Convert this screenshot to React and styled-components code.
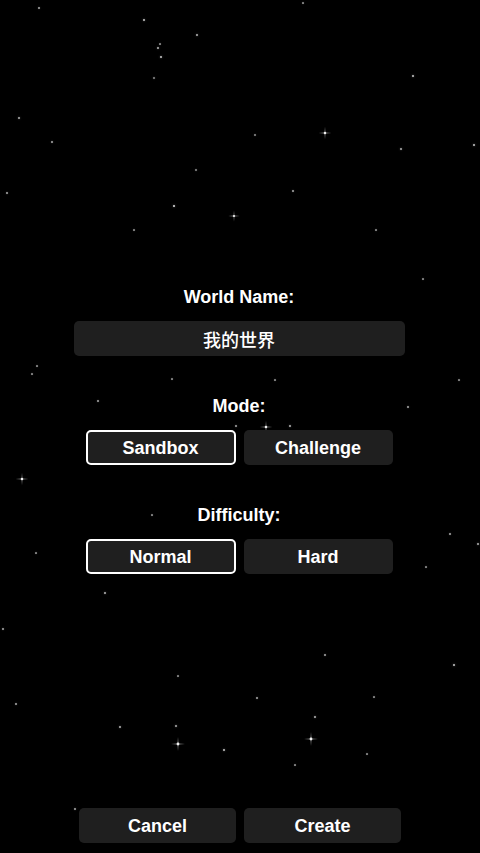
import React from "react";
import styled, { createGlobalStyle } from "styled-components";

const Global = createGlobalStyle`
  html, body { margin: 0; padding: 0; background: #000; }
  body { font-family: "Liberation Sans", Arial, sans-serif; }
  * { box-sizing: border-box; }
`;

const Screen = styled.div`
  position: relative;
  width: 480px;
  height: 853px;
  background: #000;
  overflow: hidden;
  display: flex;
  flex-direction: column;
  align-items: center;
  color: #fff;
`;

const Sky = styled.div`
  position: absolute;
  inset: 0;
  pointer-events: none;
`;

const Dot = styled.span`
  position: absolute;
  width: ${(p) => p.$s}px;
  height: ${(p) => p.$s}px;
  margin: ${(p) => -p.$s / 2}px 0 0 ${(p) => -p.$s / 2}px;
  border-radius: 50%;
  background: rgba(255, 255, 255, ${(p) => p.$o});
  box-shadow: 0 0 ${(p) => p.$s}px rgba(255, 255, 255, ${(p) => p.$o * 0.5});
`;

const Sparkle = styled.svg`
  position: absolute;
  width: 16px;
  height: 16px;
  margin: -8px 0 0 -8px;
  overflow: visible;
`;

const Form = styled.main`
  position: relative;
  z-index: 1;
  flex: 1;
  display: flex;
  flex-direction: column;
  align-items: center;
  padding-top: 286px;
  padding-right: 2px;
  gap: 39px;
`;

const Section = styled.section`
  display: flex;
  flex-direction: column;
  align-items: center;
  gap: 13px;
`;

const Label = styled.div`
  font-size: 18px;
  font-weight: 700;
  line-height: 22px;
`;

const NameField = styled.div`
  width: 331px;
  height: 35px;
  border-radius: 5px;
  background: #1f1f1f;
  display: flex;
  align-items: center;
  justify-content: center;
  padding-top: 1px;
  font-family: "Liberation Sans", "Noto Sans CJK SC", sans-serif;
  font-size: 18px;
  font-weight: 500;
  color: #fff;
`;

const Choices = styled.div`
  display: flex;
  gap: 8px;
`;

const Choice = styled.button`
  width: ${(p) => p.$w || 150}px;
  height: 35px;
  border-radius: 5px;
  background: #1f1f1f;
  border: 2px solid ${(p) => (p.$active ? "#ffffff" : "transparent")};
  color: #fff;
  font-family: "Liberation Sans", Arial, sans-serif;
  font-size: 18px;
  font-weight: 700;
  padding: 2px 0 0;
  display: flex;
  align-items: center;
  justify-content: center;
`;

const Footer = styled.footer`
  position: relative;
  z-index: 1;
  display: flex;
  gap: 8px;
  padding-bottom: 10px;
`;

const stars = [
  [39, 8, 1.5, 0.6], [144, 20, 2, 0.8], [197, 35, 1.8, 0.7], [160, 44, 1.2, 0.5],
  [158, 48, 1.8, 0.7], [161, 57, 2, 0.8], [154, 78, 1.5, 0.5], [303, 3, 1.2, 0.5],
  [413, 76, 2, 0.8], [19, 118, 2, 0.7], [52, 142, 1.5, 0.6], [255, 135, 1.3, 0.5],
  [401, 149, 2, 0.7], [474, 145, 2.2, 0.8], [196, 170, 1.3, 0.5], [7, 193, 1.5, 0.6],
  [293, 191, 1.5, 0.6], [174, 206, 2.4, 0.9], [134, 230, 1.2, 0.5], [376, 230, 1.2, 0.5],
  [423, 279, 1.2, 0.5], [37, 366, 1.2, 0.5], [32, 374, 1.2, 0.5], [172, 379, 1.2, 0.5],
  [275, 380, 1.2, 0.5], [459, 380, 1.2, 0.5], [98, 401, 1.5, 0.6], [408, 407, 1.5, 0.6],
  [236, 426, 1.5, 0.6], [290, 426, 1.8, 0.7], [152, 515, 1.2, 0.5], [36, 553, 1.2, 0.5],
  [450, 534, 1.5, 0.6], [478, 544, 2, 0.7], [426, 567, 1.2, 0.5], [105, 593, 1.8, 0.7],
  [3, 629, 1.5, 0.6], [325, 655, 1.5, 0.6], [454, 665, 2.4, 0.8], [16, 704, 1.5, 0.6],
  [178, 676, 1.2, 0.5], [257, 698, 1.5, 0.6], [374, 697, 1.2, 0.5], [120, 727, 1.8, 0.7],
  [176, 726, 2, 0.7], [224, 750, 2.2, 0.8], [315, 717, 1.8, 0.7], [367, 754, 1.2, 0.5],
  [295, 765, 1.2, 0.5], [75, 809, 1.5, 0.6],
];

const sparkles = [
  [325, 133, 0.9], [234, 216, 0.8], [22, 479, 0.9], [266, 427, 0.9], [178, 744, 1], [311, 739, 1],
];

function SparkleIcon({ x, y, k }) {
  return (
    <Sparkle viewBox="-8 -8 16 16" style={{ left: x, top: y, transform: `scale(${k})` }}>
      <path d="M0 -7 L0.5 -0.5 L7 0 L0.5 0.5 L0 7 L-0.5 0.5 L-7 0 L-0.5 -0.5 Z" fill="rgba(255,255,255,0.55)" />
      <circle r="1.4" fill="rgba(255,255,255,0.9)" />
    </Sparkle>
  );
}

export default function App() {
  return (
    <>
      <Global />
      <Screen>
        <Sky>
          {stars.map(([x, y, s, o], i) => (
            <Dot key={i} $s={s} $o={o} style={{ left: x, top: y }} />
          ))}
          {sparkles.map(([x, y, k], i) => (
            <SparkleIcon key={i} x={x} y={y} k={k} />
          ))}
        </Sky>
        <Form>
          <Section>
            <Label>World Name:</Label>
            <NameField>我的世界</NameField>
          </Section>
          <Section>
            <Label>Mode:</Label>
            <Choices>
              <Choice $active>Sandbox</Choice>
              <Choice $w={149}>Challenge</Choice>
            </Choices>
          </Section>
          <Section>
            <Label>Difficulty:</Label>
            <Choices>
              <Choice $active>Normal</Choice>
              <Choice $w={149}>Hard</Choice>
            </Choices>
          </Section>
        </Form>
        <Footer>
          <Choice $w={157}>Cancel</Choice>
          <Choice $w={157}>Create</Choice>
        </Footer>
      </Screen>
    </>
  );
}
